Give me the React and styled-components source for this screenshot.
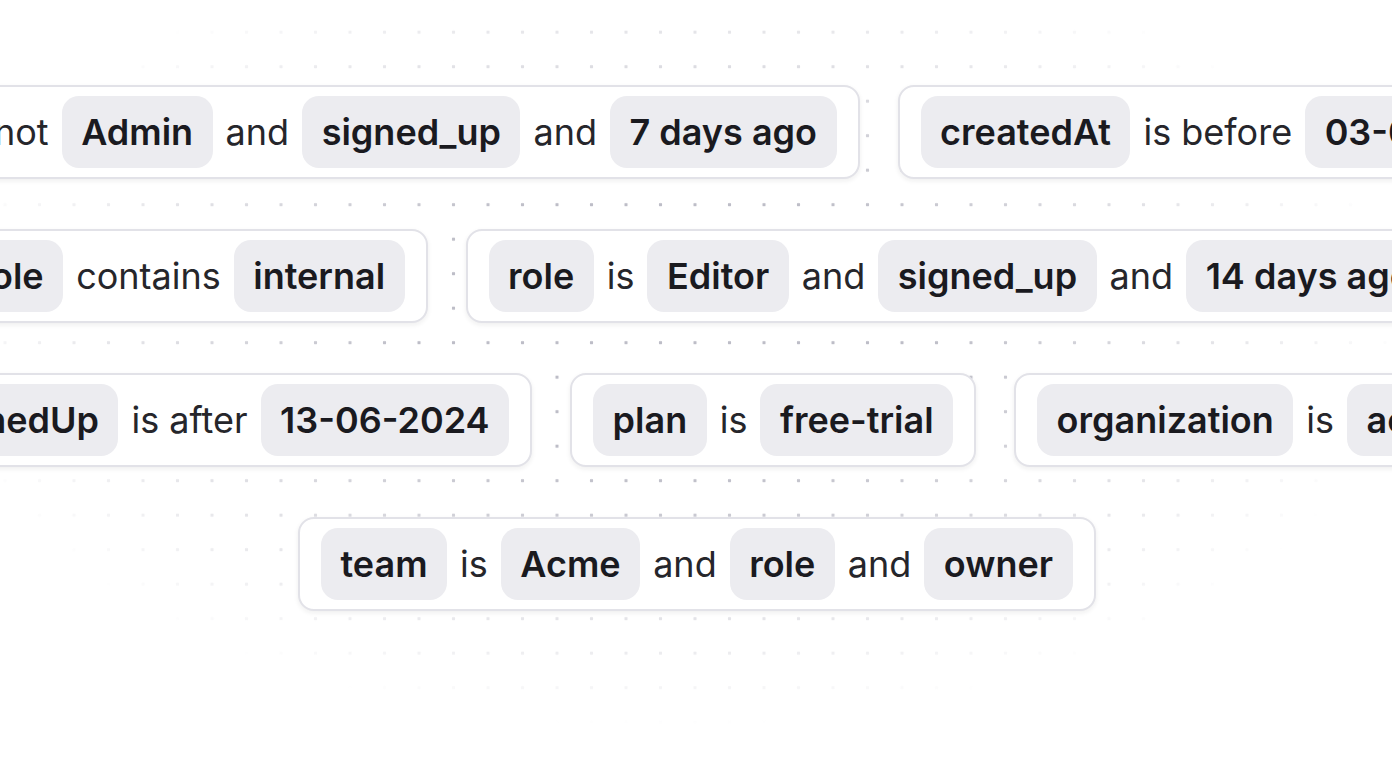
import React from "react";
import styled, { createGlobalStyle } from "styled-components";

const Global = createGlobalStyle`
  html, body { margin: 0; padding: 0; background: #ffffff; }
  body { font-family: Inter, "Noto Sans", sans-serif; -webkit-font-smoothing: antialiased; }
`;

const Canvas = styled.div`
  position: relative;
  width: 100vw;
  height: 780px;
  overflow: hidden;
  background: #ffffff;

  &::before {
    content: "";
    position: absolute;
    inset: 0;
    background-image: radial-gradient(circle, #bdbdc7 1.6px, transparent 2px);
    background-size: 34.5px 34.5px;
    background-position: -12.25px 14.95px;
    -webkit-mask-image: radial-gradient(740px 400px at 48% 42%, #000 35%, transparent 100%);
    mask-image: radial-gradient(740px 400px at 48% 42%, #000 35%, transparent 100%);
    pointer-events: none;
  }
`;

const Rows = styled.div`
  position: relative;
  display: flex;
  flex-direction: column;
  gap: 50px;
  padding-top: 85px;
`;

const Track = styled.div`
  display: flex;
  gap: 38px;
  width: max-content;
  transform: translateX(${(p) => p.$offset}px);
`;

const Filter = styled.div`
  display: flex;
  align-items: center;
  gap: 13px;
  height: 94px;
  box-sizing: border-box;
  padding: 0 21px;
  background: #ffffff;
  border: 2px solid #e2e2e8;
  border-radius: 16px;
  box-shadow: 0 2px 5px rgba(24, 24, 27, 0.07);
  white-space: nowrap;
`;

const Token = styled.span`
  display: inline-flex;
  align-items: center;
  height: 72px;
  padding: 0 19.5px;
  border-radius: 17px;
  background: #ececf0;
  color: #1a1a1f;
  font-size: 36px;
  font-weight: 600;
`;

const Word = styled.span`
  color: #26262b;
  font-size: 36px;
  font-weight: 400;
`;

const rows = [
  {
    offset: -185,
    filters: [
      ["role", "is not", "Admin", "and", "signed_up", "and", "7 days ago"],
      ["createdAt", "is before", "03-06-2024"],
    ],
  },
  {
    offset: -65,
    filters: [
      ["role", "contains", "internal"],
      ["role", "is", "Editor", "and", "signed_up", "and", "14 days ago"],
    ],
  },
  {
    offset: -110,
    filters: [
      ["signedUp", "is after", "13-06-2024"],
      ["plan", "is", "free-trial"],
      ["organization", "is", "acme"],
    ],
  },
  {
    offset: 298,
    filters: [["team", "is", "Acme", "and", "role", "and", "owner"]],
  },
];

export default function App() {
  return (
    <>
      <Global />
      <Canvas>
        <Rows>
          {rows.map((row, i) => (
            <Track key={i} $offset={row.offset}>
              {row.filters.map((parts, j) => (
                <Filter key={j}>
                  {parts.map((part, k) =>
                    k % 2 === 0 ? (
                      <Token key={k}>{part}</Token>
                    ) : (
                      <Word key={k}>{part}</Word>
                    )
                  )}
                </Filter>
              ))}
            </Track>
          ))}
        </Rows>
      </Canvas>
    </>
  );
}
